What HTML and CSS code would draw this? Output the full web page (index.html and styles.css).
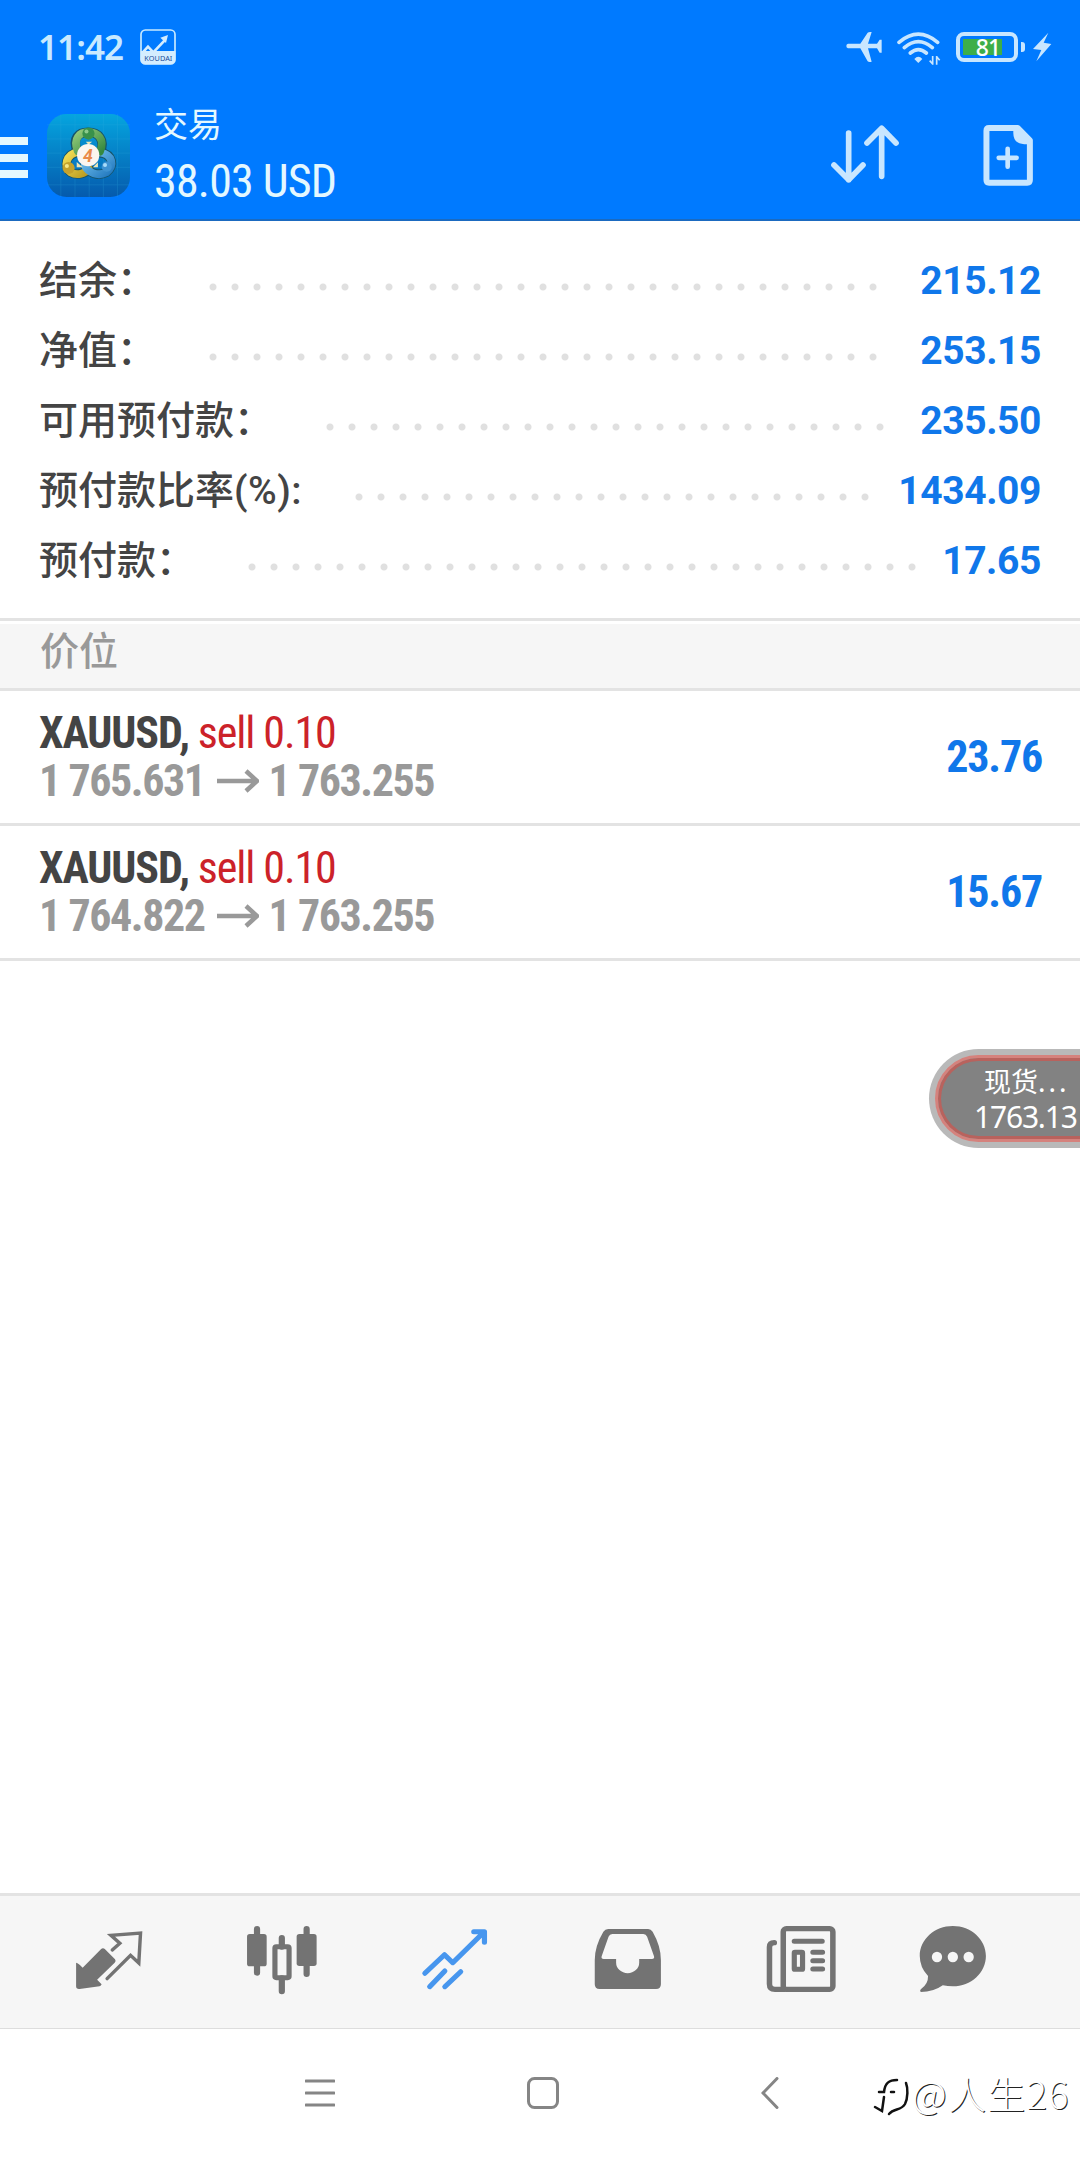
FILE: index.html
```html
<!DOCTYPE html>
<html lang="zh-CN">
<head>
    <meta charset="UTF-8">
    <meta name="viewport" content="width=device-width, initial-scale=1.0">
    <title>交易</title>
    <link rel="stylesheet" href="styles.css">
</head>
<body>
    <header class="header">
        <div class="status-bar">
            <span class="clock">11:42</span>
            <svg class="app-badge" viewBox="0 0 108 108">
                <rect x="3" y="3" width="102" height="102" rx="13" fill="none" stroke="#c8eaff" stroke-width="5"/>
                <path d="M2 66H106V92a14 14 0 0 1-14 14H16a14 14 0 0 1-14-14Z" fill="#d4edff"/>
                <path d="M5 74L24 53L40 70L74 34" fill="none" stroke="#d4edff" stroke-width="8"/>
                <path d="M84 18L78 42L61 26Z" fill="#d4edff"/>
                <text x="55" y="96" text-anchor="middle" textLength="84">KOUDAI</text>
            </svg>
            <div class="status-icons">
                <svg width="36" height="32" viewBox="0 0 108 96" fill="#c8e6ff">
                    <path d="M6 38H43L65 5Q68 2 77 3L66 38H93L101 26H107V65H101L93 52H66L77 92Q69 95 65 91L43 52H6Q1 51 1 45T6 38Z"/>
                </svg>
                <svg class="wifi" width="44" height="36" viewBox="0 0 132 108" fill="none" stroke="#c8e6ff" stroke-width="11" stroke-linecap="round">
                    <path d="M6 34Q64-15 122 34M22 50Q64 14 106 50M40 66Q64 46 88 66"/>
                    <path d="M52 84Q64 71 76 84L64 96Z" fill="#c8e6ff" stroke="none"/>
                    <path d="M107 75V101M119 101V75M107 99L98 89M119 77L128 88" stroke-width="5" stroke-linecap="butt"/>
                </svg>
                <div class="battery"><span>81</span></div>
                <svg class="bolt" width="20" height="30" viewBox="0 0 60 90" fill="#c8e6ff">
                    <path d="M49 2L3 51L28 54L13 88L58 36L35 32Z"/>
                </svg>
            </div>
        </div>
        <div class="toolbar">
            <div class="menu-btn"><i></i><i></i><i></i></div>
            <svg class="app-logo" viewBox="0 0 246 246">
                <defs>
                    <linearGradient id="tile" x1="0" y1="0" x2="0" y2="1">
                        <stop offset="0" stop-color="#05a5df"/>
                        <stop offset="1" stop-color="#055aad"/>
                    </linearGradient>
                    <linearGradient id="green" x1="0" y1="0" x2="1" y2="1">
                        <stop offset="0" stop-color="#92ca79"/>
                        <stop offset="1" stop-color="#35883f"/>
                    </linearGradient>
                    <linearGradient id="yellow" x1="0" y1="0" x2="1" y2="1">
                        <stop offset="0" stop-color="#f5df55"/>
                        <stop offset="1" stop-color="#b99a20"/>
                    </linearGradient>
                    <linearGradient id="blue" x1="0" y1="0" x2="1" y2="1">
                        <stop offset="0" stop-color="#78c6f1"/>
                        <stop offset="1" stop-color="#2379bf"/>
                    </linearGradient>
                </defs>
                <rect width="246" height="246" rx="58" fill="url(#tile)"/>
                <path d="M0 32H246M0 74H246M0 116H246M0 158H246M0 210H246M41 0V246M83 0V246M125 0V246M167 0V246M209 0V246" stroke="#35aee0" stroke-width="2" opacity=".3"/>
                <g fill="none" stroke-linecap="round">
                    <path d="M91 113C72 70 95 54 122 54C151 54 175 75 157 115" stroke="#17546a" stroke-width="28"/>
                    <path d="M93 112C55 120 48 156 70 173C90 184 116 176 125 162" stroke="#17546a" stroke-width="28"/>
                    <path d="M158 114C195 120 201 153 176 173C151 186 122 174 112 153" stroke="#17546a" stroke-width="28"/>
                    <path d="M93 112C55 120 48 156 70 173C90 184 114 176 123 162" stroke="url(#yellow)" stroke-width="23"/>
                    <path d="M158 114C195 120 201 153 176 173C151 186 122 174 112 153" stroke="url(#blue)" stroke-width="23"/>
                    <path d="M91 110C76 72 97 54 122 54C151 54 173 75 157 112" stroke="url(#green)" stroke-width="23"/>
                </g>
                <path d="M88 142L88 158L106 158M151 143L151 158L136 158M115 82L123 91L134 82" fill="#eee6b6"/>
                <circle cx="123" cy="58" r="18" fill="#39914b"/>
                <circle cx="64" cy="160" r="18" fill="#c5a22c"/>
                <circle cx="177" cy="156" r="15" fill="#3e92d1"/>
                <circle cx="117" cy="52" r="6" fill="#8bca8c"/>
                <circle cx="59" cy="154" r="6" fill="#f8e987"/>
                <circle cx="172" cy="151" r="6" fill="#a7dcfa"/>
                <circle cx="122" cy="122" r="33" fill="#fbf5ef"/>
                <text x="121" y="142" text-anchor="middle">4</text>
            </svg>
            <div class="account">
                <div class="account-title">交易</div>
                <div class="account-profit condensed">38.03 USD</div>
            </div>
            <svg class="sort-btn" viewBox="0 0 204 180" fill="none" stroke="#c8e6ff" stroke-width="17" stroke-linecap="round" stroke-linejoin="round">
                <path d="M53 27V167M9 123L53 167L96 123M152 157V15M108 57L152 13L195 57"/>
            </svg>
            <svg class="new-btn" viewBox="0 0 150 184" fill="none" stroke="#c8e6ff">
                <path d="M18 9H104L141 46V166Q141 174 133 174H18Q10 174 10 166V17Q10 9 18 9Z" stroke-width="18" stroke-linejoin="round"/>
                <path d="M91 5H107L147 44V58H124Q91 57 91 23Z" fill="#c8e6ff" stroke="none"/>
                <path d="M74 72V126M47 99H101" stroke-width="14" stroke-linecap="round"/>
            </svg>
        </div>
    </header>

    <section class="summary">
        <div class="summary-row">
            <span>结余：</span><i class="dots" style="--dots: 31"></i><b>215.12</b>
        </div>
        <div class="summary-row">
            <span>净值：</span><i class="dots" style="--dots: 31"></i><b>253.15</b>
        </div>
        <div class="summary-row">
            <span>可用预付款：</span><i class="dots" style="--dots: 26"></i><b>235.50</b>
        </div>
        <div class="summary-row">
            <span>预付款比率<em>(%):</em></span><i class="dots" style="--dots: 24"></i><b>1434.09</b>
        </div>
        <div class="summary-row">
            <span>预付款：</span><i class="dots" style="--dots: 31"></i><b>17.65</b>
        </div>
    </section>

    <h2 class="section-title">价位</h2>

    <main class="positions">
        <div class="position condensed">
            <div>
                <div class="symbol">XAUUSD, <span>sell 0.10</span></div>
                <div class="prices"><span>1 765.631</span><svg viewBox="0 0 42 24"><path d="M0 12H40M29 2L40 12L29 22"/></svg><span>1 763.255</span></div>
            </div>
            <div class="profit">23.76</div>
        </div>
        <div class="position condensed">
            <div>
                <div class="symbol">XAUUSD, <span>sell 0.10</span></div>
                <div class="prices"><span>1 764.822</span><svg viewBox="0 0 42 24"><path d="M0 12H40M29 2L40 12L29 22"/></svg><span>1 763.255</span></div>
            </div>
            <div class="profit">15.67</div>
        </div>
    </main>

    <div class="float-quote">
        <div class="float-inner">
            <div class="float-name">现货<span>...</span></div>
            <div class="float-price">1763.13</div>
        </div>
    </div>

    <nav class="tabs">
        <a class="tab">
            <svg viewBox="210 132 209 216" preserveAspectRatio="none">
                <path d="M219 248Q226 250 238 263L291 208Q297 202 303 208L332 238Q336 243 331 248L280 299L293 313Q292 318 287 319L229 327Q219 328 219 319Z" fill="currentColor"/>
                <path d="M324 210L346 190L320 166L406 159L401 249L377 226L309 296" fill="none" stroke="currentColor" stroke-width="10" stroke-linecap="round"/>
            </svg>
        </a>
        <a class="tab">
            <svg viewBox="712 132 209 216" preserveAspectRatio="none">
                <path d="M744 147V278M888 147V282M816 174V200M816 295V334" stroke="currentColor" stroke-width="18" stroke-linecap="round"/>
                <rect x="715" y="162" width="57" height="97" rx="8" fill="currentColor"/>
                <rect x="859" y="162" width="58" height="96" rx="8" fill="currentColor"/>
                <rect x="796" y="200" width="41" height="93" rx="4" fill="none" stroke="currentColor" stroke-width="15"/>
            </svg>
        </a>
        <a class="tab active">
            <svg viewBox="1215 132 209 216" preserveAspectRatio="none" fill="none" stroke="currentColor" stroke-width="15" stroke-linecap="round" stroke-linejoin="round">
                <path d="M1232 280L1289 224L1313 248L1403 157M1374 155H1405V187M1246 320L1290 273M1290 320L1336 275"/>
            </svg>
        </a>
        <a class="tab">
            <svg viewBox="150 132 209 216" preserveAspectRatio="none" fill="currentColor">
                <path fill-rule="evenodd" d="M197 147H313Q321 147 326 155Q350 198 350 240V313Q350 327 336 327H172Q158 327 158 313V240Q158 198 183 155Q188 147 197 147ZM209 162Q201 162 198 170L178 229Q176 237 184 237H220V248A33 31 0 0 0 287 248V237H324Q332 237 330 229L310 170Q307 162 299 162Z"/>
            </svg>
        </a>
        <a class="tab">
            <svg viewBox="653 132 209 216" preserveAspectRatio="none" fill="none" stroke="currentColor" stroke-width="16">
                <rect x="706" y="146" width="144" height="182" rx="9"/>
                <path d="M710 328H682Q666 328 666 312V201Q666 188 680 188" stroke-linecap="round"/>
                <path d="M738 184H819M792 217H820M792 242H820M792 267H820" stroke-width="15" stroke-linecap="round"/>
                <rect x="738" y="217" width="24" height="51" rx="2" stroke-width="15"/>
            </svg>
        </a>
        <a class="tab">
            <svg viewBox="1095 132 209 216" preserveAspectRatio="none">
                <path d="M1199 138C1252 138 1295 178 1295 228S1252 319 1199 319Q1184 319 1170 316Q1143 336 1106 336Q1102 333 1106 328Q1128 312 1127 288Q1103 262 1103 228C1103 178 1146 138 1199 138Z" fill="currentColor"/>
                <g fill="#f6f6f6"><ellipse cx="1153" cy="231" rx="15" ry="16"/><ellipse cx="1199" cy="231" rx="15" ry="16"/><ellipse cx="1245" cy="231" rx="15" ry="16"/></g>
            </svg>
        </a>
    </nav>

    <footer class="system-nav">
        <svg class="nav-menu" viewBox="0 0 30 32"><path d="M1 4H29M1 16H29M1 28H29"/></svg>
        <svg class="nav-home" viewBox="0 0 32 32"><rect x="1.5" y="1.5" width="29" height="29" rx="6"/></svg>
        <svg class="nav-back" viewBox="0 0 18 32"><path d="M16 1.5L2 16L16 30.5"/></svg>
        <div class="watermark">
            <svg viewBox="0 0 36 40"><path d="M6 15H11C12 6 16 3 24 3M18 15H21M11 20L9 34L2 30M33 6C35 11 35 21 32 27C28 34 21 31 16 37"/></svg>
            <span>@人生26</span>
        </div>
    </footer>
</body>
</html>
```

FILE: styles.css
```css
* {
    box-sizing: border-box;
}
body {
    margin: 0;
    width: 1080px;
    height: 2158px;
    display: flex;
    flex-direction: column;
    position: relative;
    overflow: hidden;
    background: #fff;
    font-family: Roboto, "Noto Sans CJK SC", sans-serif;
    color: #444;
}
svg {
    display: block;
    flex: none;
}
.condensed {
    font-family: "Roboto Condensed", Roboto, sans-serif;
    font-stretch: 75%;
}

/* header */
.header {
    height: 221px;
    background: #007aff;
    border-bottom: 2px solid #1b6ac0;
    color: #e4f8ff;
}
.status-bar {
    display: flex;
    align-items: center;
    height: 94px;
    padding: 0 28px 0 38px;
}
.clock {
    width: 102px;
    margin-top: -1px;
    font-family: "Noto Sans", sans-serif;
    font-size: 35px;
    font-weight: 650;
    letter-spacing: -0.9px;
    color: #c8eaff;
}
.app-badge {
    width: 36px;
    height: 36px;
}
.app-badge text {
    font: 22px "Noto Sans", sans-serif;
    fill: #1b4e9b;
}
.status-icons {
    display: flex;
    align-items: center;
    margin-left: auto;
}
.wifi {
    margin: 4px 0 0 15px;
}
.battery {
    position: relative;
    width: 62px;
    height: 30px;
    margin-left: 15px;
    padding: 3px;
    border: 4px solid #c8e6ff;
    border-radius: 8px;
    text-align: center;
    background: linear-gradient(#3dae49, #3dae49) 3px 3px / 39px 16px no-repeat;
}
.battery::after {
    content: "";
    position: absolute;
    right: -11px;
    top: 6px;
    width: 4px;
    height: 10px;
    border-radius: 0 3px 3px 0;
    background: #c8e6ff;
}
.battery span {
    display: block;
    padding-left: 2px;
    font: 500 23px/16px "Noto Sans", sans-serif;
    letter-spacing: -1px;
    color: #fff;
}
.bolt {
    margin-left: 14px;
}
.toolbar {
    display: flex;
    height: 125px;
}
.menu-btn {
    width: 28px;
    margin: 43px 19px 0 0;
}
.menu-btn i {
    display: block;
    height: 8px;
    margin-bottom: 8.5px;
    background: #e4f8ff;
}
.app-logo {
    width: 83px;
    height: 83px;
    margin-top: 20px;
}
.app-logo text {
    font: italic bold 52px Roboto, sans-serif;
    fill: #e98a4a;
}
.account {
    flex: 1;
    padding-left: 24px;
}
.account-title {
    margin-top: 4px;
    font-family: "Noto Sans CJK SC", sans-serif;
    font-size: 34px;
    line-height: 50px;
}
.account-profit {
    margin-top: 5px;
    font-size: 46px;
    line-height: 56px;
    letter-spacing: -0.8px;
}
.sort-btn {
    width: 68px;
    height: 60px;
    margin-top: 30px;
}
.new-btn {
    width: 50px;
    height: 61px;
    margin: 31px 47px 0 84px;
}

/* account summary */
.summary {
    height: 400px;
    padding: 24px 39px 0 39px;
    border-bottom: 3px solid #e3e3e3;
}
.summary-row {
    display: flex;
    align-items: center;
    height: 70px;
    font-size: 39px;
    font-weight: 500;
}
.summary-row span {
    line-height: 70px;
    padding-top: 1px;
}
.summary-row em {
    font-style: normal;
    letter-spacing: 0.5px;
}
.summary-row b {
    margin-left: auto;
    padding-top: 2px;
    font-weight: 700;
    letter-spacing: -0.4px;
    color: #1077ea;
}
.dots {
    width: calc(var(--dots) * 22px);
    height: 8px;
    margin: 14px 0 0 46px;
    background: radial-gradient(circle, #e0e0e0 3px, transparent 4px) 0 0 / 22px 8px;
}
.section-title {
    height: 67px;
    margin: 3px 0 0;
    padding-left: 40px;
    background: #f6f6f6;
    border-bottom: 3px solid #e3e3e3;
    font-size: 39px;
    font-weight: 500;
    line-height: 56px;
    color: #999;
}

/* open positions */
.positions {
    flex: 1;
}
.position {
    display: flex;
    justify-content: space-between;
    align-items: center;
    height: 135px;
    padding: 0 38px 0 39px;
    border-bottom: 3px solid #e3e3e3;
    font-size: 44px;
    font-weight: 700;
}
.symbol {
    line-height: 48px;
    letter-spacing: -1.1px;
}
.symbol span {
    font-weight: 400;
    color: #cc2229;
}
.prices {
    display: flex;
    align-items: center;
    line-height: 48px;
    letter-spacing: -1.45px;
    color: #999;
}
.prices svg {
    width: 42px;
    height: 24px;
    margin: -1px 10px 0 12px;
    fill: none;
    stroke: #999;
    stroke-width: 4.5;
}
.profit {
    letter-spacing: -1.2px;
    color: #1077ea;
}

/* floating quote */
.float-quote {
    position: absolute;
    left: 929px;
    top: 1049px;
    width: 200px;
    height: 99px;
    padding: 6px;
    border-radius: 50px;
    background: #b9b9b9;
}
.float-inner {
    height: 87px;
    padding: 6px 0 0 36px;
    border: 3px solid #d5827d;
    border-radius: 44px;
    box-shadow: inset 0 0 0 3px #b9625d;
    background: #828282;
    color: #fff;
}
.float-name {
    padding-left: 10px;
    font: 27px/34px "Noto Sans CJK SC", sans-serif;
}
.float-name span {
    letter-spacing: 3px;
}
.float-price {
    font: 30px/38px "Noto Sans", sans-serif;
    letter-spacing: -1.2px;
}

/* bottom tabs */
.tabs {
    display: flex;
    align-items: center;
    height: 136px;
    padding: 0 61px 4px 22px;
    background: #f6f6f6;
    border-top: 3px solid #e3e3e3;
    border-bottom: 1px solid #ddd;
}
.tab {
    display: flex;
    justify-content: center;
    width: 173px;
    color: #737373;
}
.tab:last-child {
    width: 131px;
}
.tab.active {
    color: #4796ee;
}
.tab svg {
    width: 72px;
    height: 72px;
}

/* system navigation */
.system-nav {
    display: flex;
    align-items: center;
    height: 129px;
    padding: 0 0 2px 305px;
    fill: none;
    stroke: #858585;
    stroke-width: 3;
    stroke-linecap: round;
}
.nav-menu {
    width: 30px;
    height: 32px;
}
.nav-home {
    width: 32px;
    height: 32px;
    margin-left: 192px;
}
.nav-back {
    width: 18px;
    height: 32px;
    margin-left: 202px;
}
.watermark {
    display: flex;
    align-items: center;
    margin-left: 94px;
    stroke: none;
    font: 300 38px/50px "Noto Sans CJK SC", sans-serif;
    letter-spacing: 1.3px;
    color: #fff;
    text-shadow: 1px 1px 0 #222;
}
.watermark svg {
    width: 36px;
    height: 40px;
    margin: 8px 3px 0 0;
    stroke: #111;
    stroke-width: 2.5;
}
```
